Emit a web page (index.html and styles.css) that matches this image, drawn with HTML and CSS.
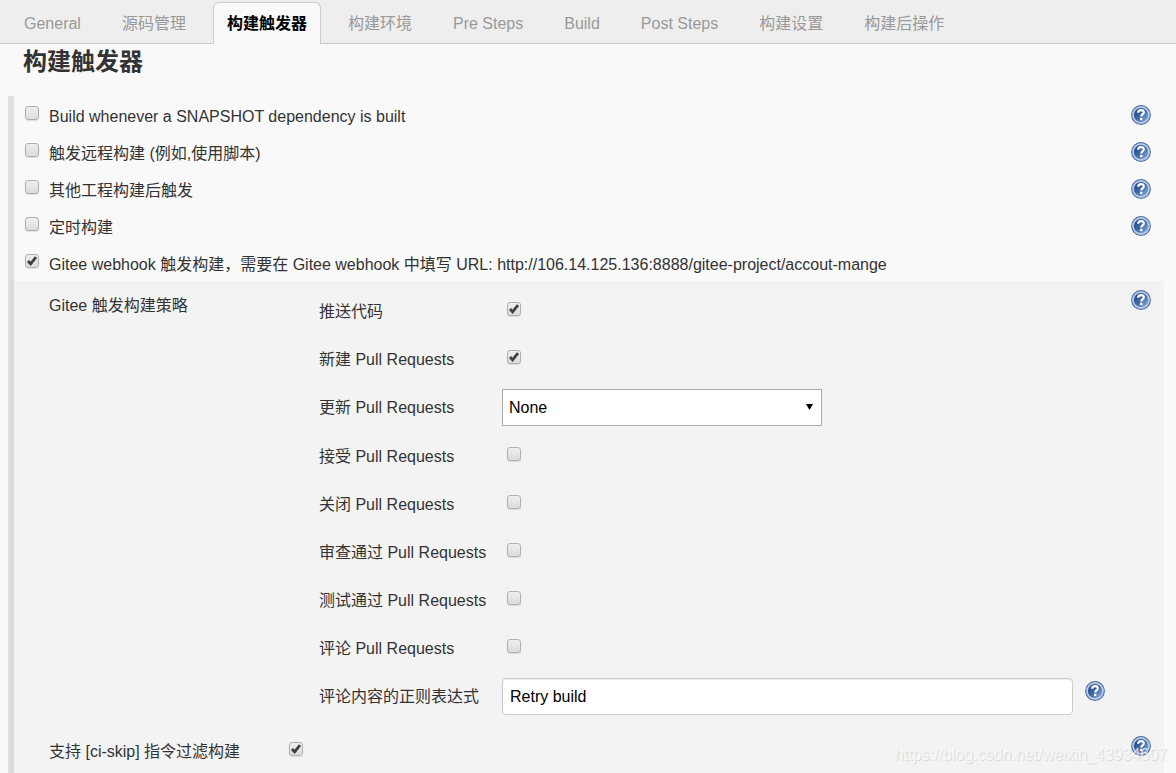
FILE: index.html
```html
<!DOCTYPE html>
<html lang="zh-CN">
<head>
<meta charset="utf-8">
<title>构建触发器</title>
<link rel="stylesheet" href="styles.css">
</head>
<body>
<svg class="defs" aria-hidden="true">
  <defs>
    <linearGradient id="disc" x1="0" y1="0" x2="1" y2="1">
      <stop offset="0" stop-color="#1d3f7c"/>
      <stop offset="0.5" stop-color="#3f69a8"/>
      <stop offset="1" stop-color="#8fb3de"/>
    </linearGradient>
    <symbol id="help" viewBox="0 0 20 20">
      <circle cx="10" cy="10" r="9.9" fill="#4468a3"/>
      <circle cx="10" cy="10" r="8.9" fill="#b9cae3"/>
      <circle cx="10" cy="10" r="7.1" fill="url(#disc)"/>
      <path d="M7.1 7.8C7.2 5.9 8.3 5.1 10 5.1C11.7 5.1 12.8 6 12.8 7.4C12.8 9.2 10.3 9.2 10.3 11.6" fill="none" stroke="#fff" stroke-width="2.2"/>
      <rect x="9.1" y="12.8" width="2.3" height="2.3" fill="#fff"/>
    </symbol>
  </defs>
</svg>

<nav class="tabs">
  <a class="tab" href="#general">General</a>
  <a class="tab" href="#scm">源码管理</a>
  <a class="tab active" href="#triggers" aria-current="page">构建触发器</a>
  <a class="tab" href="#env">构建环境</a>
  <a class="tab" href="#pre">Pre Steps</a>
  <a class="tab" href="#build">Build</a>
  <a class="tab" href="#post">Post Steps</a>
  <a class="tab" href="#settings">构建设置</a>
  <a class="tab" href="#after">构建后操作</a>
</nav>

<main class="page" id="triggers">
  <h1 class="title">构建触发器</h1>
  <form class="section">
    <div class="option">
      <input class="check" type="checkbox" id="snapshot">
      <label for="snapshot">Build whenever a SNAPSHOT dependency is built</label>
      <button class="help" type="button" aria-label="帮助"><svg><use href="#help"/></svg></button>
    </div>
    <div class="option">
      <input class="check" type="checkbox" id="remote">
      <label for="remote">触发远程构建 (例如,使用脚本)</label>
      <button class="help" type="button" aria-label="帮助"><svg><use href="#help"/></svg></button>
    </div>
    <div class="option">
      <input class="check" type="checkbox" id="upstream">
      <label for="upstream">其他工程构建后触发</label>
      <button class="help" type="button" aria-label="帮助"><svg><use href="#help"/></svg></button>
    </div>
    <div class="option">
      <input class="check" type="checkbox" id="timer">
      <label for="timer">定时构建</label>
      <button class="help" type="button" aria-label="帮助"><svg><use href="#help"/></svg></button>
    </div>
    <div class="option">
      <input class="check" type="checkbox" id="gitee" checked>
      <label for="gitee">Gitee webhook 触发构建，需要在 Gitee webhook 中填写 URL: http://106.14.125.136:8888/gitee-project/accout-mange</label>
    </div>

    <div class="nested">
      <div class="setting">
        <span class="setting-name">Gitee 触发构建策略</span>
        <div class="policies">
          <div class="policy toggle">
            <label for="push">推送代码</label>
            <input class="check" type="checkbox" id="push" checked>
          </div>
          <div class="policy toggle">
            <label for="pr-new">新建 Pull Requests</label>
            <input class="check" type="checkbox" id="pr-new" checked>
          </div>
          <div class="policy">
            <label for="pr-update">更新 Pull Requests</label>
            <span class="select-box">
              <select class="select" id="pr-update"><option>None</option></select>
              <svg class="arrow" viewBox="0 0 8 8" aria-hidden="true"><path d="M0 0.5H8L4 7.5Z"/></svg>
            </span>
          </div>
          <div class="policy toggle">
            <label for="pr-accept">接受 Pull Requests</label>
            <input class="check" type="checkbox" id="pr-accept">
          </div>
          <div class="policy toggle">
            <label for="pr-close">关闭 Pull Requests</label>
            <input class="check" type="checkbox" id="pr-close">
          </div>
          <div class="policy toggle">
            <label for="pr-review">审查通过 Pull Requests</label>
            <input class="check" type="checkbox" id="pr-review">
          </div>
          <div class="policy toggle">
            <label for="pr-test">测试通过 Pull Requests</label>
            <input class="check" type="checkbox" id="pr-test">
          </div>
          <div class="policy toggle">
            <label for="pr-comment">评论 Pull Requests</label>
            <input class="check" type="checkbox" id="pr-comment">
          </div>
          <div class="policy">
            <label for="regex">评论内容的正则表达式</label>
            <div class="field">
              <input class="text" type="text" id="regex" value="Retry build">
              <button class="help" type="button" aria-label="帮助"><svg><use href="#help"/></svg></button>
            </div>
          </div>
        </div>
        <button class="help" type="button" aria-label="帮助"><svg><use href="#help"/></svg></button>
      </div>
      <div class="setting">
        <label class="setting-name" for="ci-skip">支持 [ci-skip] 指令过滤构建</label>
        <input class="check" type="checkbox" id="ci-skip" checked>
        <button class="help" type="button" aria-label="帮助"><svg><use href="#help"/></svg></button>
      </div>
    </div>
  </form>
</main>
<span class="watermark">https://blog.csdn.net/weixin_43934607</span>
</body>
</html>
```

FILE: styles.css
```css
* {
  box-sizing: border-box;
}

body {
  margin: 0;
  background: #f9f9f9;
  color: #333;
  font-family: "Liberation Sans", "Noto Sans CJK SC", sans-serif;
  font-size: 16px;
  line-height: 24px;
}

.defs {
  position: absolute;
  width: 0;
  height: 0;
}

.tabs {
  display: flex;
  gap: 13px;
  height: 44px;
  padding: 2px 10px 0;
  background: #eee;
  border-bottom: 1px solid #ccc;
}

.tab {
  height: 42px;
  padding: 9px 13px 8px;
  border: 1px solid transparent;
  color: #999;
  text-decoration: none;
  white-space: nowrap;
}

.tab.active {
  background: #f9f9f9;
  border-color: #ccc;
  border-bottom: 0;
  border-radius: 6px 6px 0 0;
  color: #000;
  font-weight: bold;
}

.page {
  padding: 0 12px 0 8px;
}

.title {
  margin: 0;
  padding: 0 15px 16px;
  font-size: 24px;
  line-height: 36px;
}

.section {
  border-left: 6px solid #e0e0e0;
}

.option {
  display: flex;
  align-items: flex-start;
  gap: 10px;
  height: 37px;
  padding: 9px 13px 0 11px;
}

.option .check {
  margin-top: 1px;
}

.option .help,
.setting > .help {
  margin: 0 0 0 auto;
}

.check {
  appearance: none;
  flex: none;
  width: 14px;
  height: 14px;
  margin: 0;
  border: 1px solid #b0b0b0;
  border-radius: 3px;
  background: linear-gradient(#eee, #dcdcdc);
  box-shadow: 0 1px 1px rgba(0, 0, 0, 0.1);
}

.check:checked {
  background:
    url("data:image/svg+xml,%3Csvg xmlns='http://www.w3.org/2000/svg' viewBox='0 0 12 12'%3E%3Cpath d='M2 6L4.6 8.8L10 2.2' fill='none' stroke='%23404040' stroke-width='2.8'/%3E%3C/svg%3E") center / 12px 12px,
    linear-gradient(#eee, #dcdcdc);
}

.help {
  flex: none;
  display: block;
  width: 20px;
  height: 20px;
  padding: 0;
  border: 0;
  background: none;
}

.help svg {
  display: block;
  width: 20px;
  height: 20px;
}

.nested {
  margin-left: -3px;
  padding-bottom: 8px;
  border-left: 3px solid #d9d9d9;
  background: #f3f3f3;
}

.setting {
  display: grid;
  grid-template-columns: 240px minmax(0, 1fr) 20px;
  align-items: start;
  padding: 6px 13px 6px 35px;
}

.setting-name {
  padding-top: 7px;
}

.setting > .help {
  margin-top: 3px;
}

.setting > .check {
  margin-top: 9px;
}

.policies {
  padding: 0 26px 0 30px;
}

.policy {
  display: grid;
  grid-template-columns: 183px minmax(0, 1fr);
  align-items: center;
  min-height: 48px;
}

.toggle label {
  padding-top: 2px;
}

.policy .check {
  margin: 0 5px 4px;
}

.select-box {
  position: relative;
  width: 320px;
  max-width: 100%;
  margin: 6px 0;
}

.select {
  appearance: none;
  display: block;
  width: 100%;
  height: 37px;
  padding: 0 6px;
  border: 1px solid #a9a9a9;
  border-radius: 0;
  background: #fff;
  color: #000;
  font: inherit;
}

.arrow {
  position: absolute;
  top: 14px;
  right: 9px;
  width: 7px;
  height: 8px;
  pointer-events: none;
}

.field {
  display: flex;
  align-items: flex-start;
  gap: 12px;
  margin: 6px 0;
}

.field .help {
  margin-top: 3px;
}

.text {
  flex: 1;
  min-width: 0;
  height: 37px;
  padding: 0 7px;
  border: 1px solid #ccc;
  border-radius: 4px;
  background: #fff;
  box-shadow: inset 0 1px 1px rgba(0, 0, 0, 0.08);
  color: #000;
  font: inherit;
}

.watermark {
  position: absolute;
  right: 9px;
  top: 743px;
  color: rgba(255, 255, 255, 0.7);
  text-shadow: 1px 1px 1px rgba(0, 0, 0, 0.12);
  pointer-events: none;
}
```
